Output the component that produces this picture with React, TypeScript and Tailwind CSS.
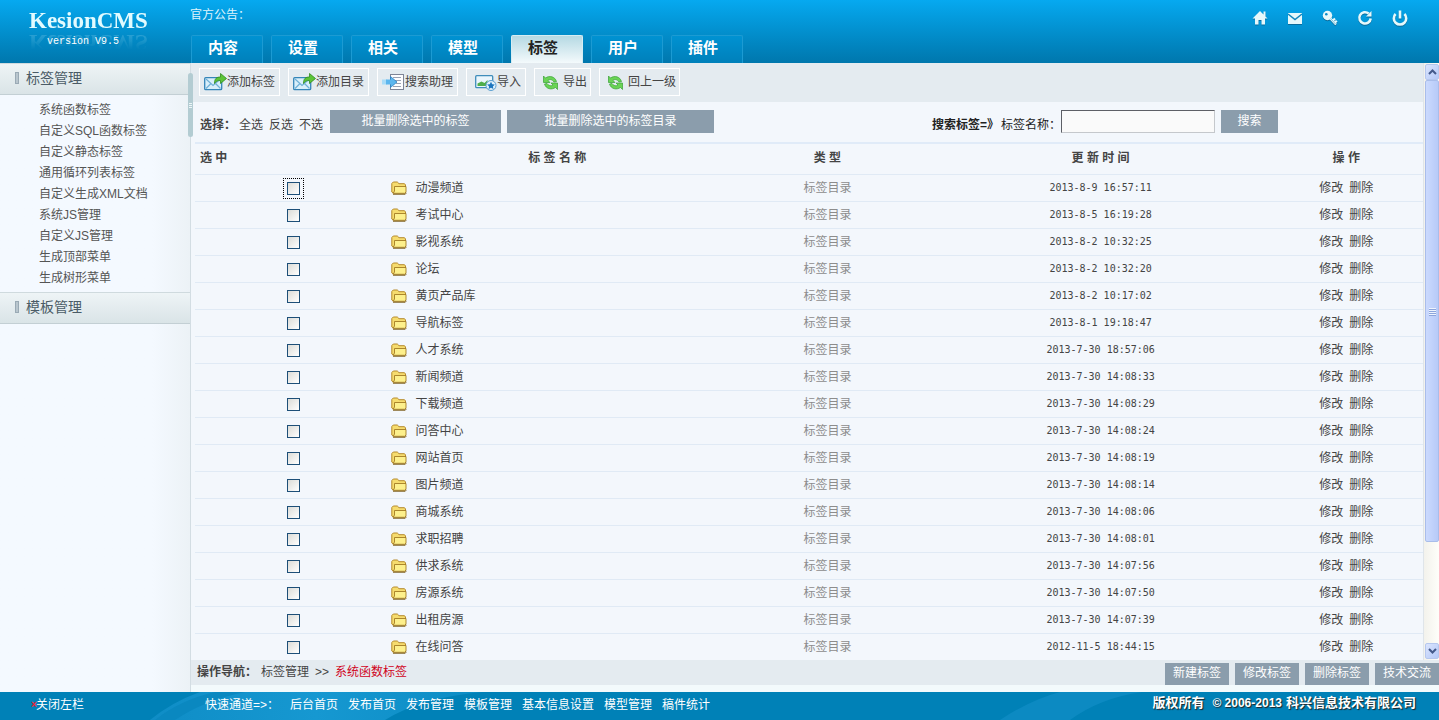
import clsx from 'clsx';

const tabs = ['内容', '设置', '相关', '模型', '标签', '用户', '插件'];

const sideLinks = [
    '系统函数标签',
    '自定义SQL函数标签',
    '自定义静态标签',
    '通用循环列表标签',
    '自定义生成XML文档',
    '系统JS管理',
    '自定义JS管理',
    '生成顶部菜单',
    '生成树形菜单',
];

const rows = [
    { name: '动漫频道', time: '2013-8-9 16:57:11' },
    { name: '考试中心', time: '2013-8-5 16:19:28' },
    { name: '影视系统', time: '2013-8-2 10:32:25' },
    { name: '论坛', time: '2013-8-2 10:32:20' },
    { name: '黄页产品库', time: '2013-8-2 10:17:02' },
    { name: '导航标签', time: '2013-8-1 19:18:47' },
    { name: '人才系统', time: '2013-7-30 18:57:06' },
    { name: '新闻频道', time: '2013-7-30 14:08:33' },
    { name: '下载频道', time: '2013-7-30 14:08:29' },
    { name: '问答中心', time: '2013-7-30 14:08:24' },
    { name: '网站首页', time: '2013-7-30 14:08:19' },
    { name: '图片频道', time: '2013-7-30 14:08:14' },
    { name: '商城系统', time: '2013-7-30 14:08:06' },
    { name: '求职招聘', time: '2013-7-30 14:08:01' },
    { name: '供求系统', time: '2013-7-30 14:07:56' },
    { name: '房源系统', time: '2013-7-30 14:07:50' },
    { name: '出租房源', time: '2013-7-30 14:07:39' },
    { name: '在线问答', time: '2012-11-5 18:44:15' },
];

const quickLinks = ['后台首页', '发布首页', '发布管理', '模板管理', '基本信息设置', '模型管理', '稿件统计'];
const bottomButtons = ['新建标签', '修改标签', '删除标签', '技术交流'];

function MailAddIcon() {
    return (
        <svg width="23" height="20" viewBox="0 0 23 20">
            <rect x="0.7" y="5.7" width="17" height="12" rx="1" fill="#d9effa" stroke="#3585b8" strokeWidth="1.3" />
            <path d="M2 7l7 6.5L16.5 7M2 16.5l5-5M16.5 16.5l-5-5" fill="none" stroke="#6fb0d6" strokeWidth="1.2" />
            <path d="M10.5 11.500c0-5 2-6.500 6-6.500V1.500L22.500 6.500l-6 5V8.500c-3 0-4.500.500-6 3z" fill="#5cc437" stroke="#2e8b1e" strokeWidth="0.8" />
        </svg>
    );
}

function SearchDocIcon() {
    return (
        <svg width="23" height="20" viewBox="0 0 23 20">
            <rect x="8.5" y="2.5" width="13" height="15" fill="#fdfdff" stroke="#7d8496" />
            <path d="M11 5.5h8M12 8.5h7M14 11.500h5M11 14.500h8" stroke="#9aa2b3" />
            <path d="M0 7.500h5v5H0z" fill="#a9dcf8" />
            <path d="M4 7.500h4.500V4.500L15 10l-6.500 5.500v-3H4z" fill="#5cb6ee" />
            <path d="M8.500 7.500v-3L15 10l-6.500 5.500v-3" fill="none" stroke="#2a7fc2" strokeWidth="0.8" />
        </svg>
    );
}

function ImportIcon() {
    return (
        <svg width="23" height="20" viewBox="0 0 23 20">
            <rect x="1.7" y="3.7" width="17" height="12" rx="1" fill="#eaf6fd" stroke="#3f8dbb" strokeWidth="1.3" />
            <path d="M3.500 14v-2.500l4-2 3 1.500 3-3v6z" fill="#4fae4b" />
            <circle cx="17" cy="13.500" r="5" fill="#dff0fb" stroke="#5b9fd0" />
            <path d="M17 9.800l1.200 2.400 2.600.400-1.900 1.800.500 2.600-2.400-1.200-2.400 1.200.500-2.600-1.900-1.800 2.600-.400z" fill="#1d76bf" />
        </svg>
    );
}

function CycleIcon() {
    return (
        <svg width="15" height="15" viewBox="0 0 15 15">
            <g fill="#6ad455" stroke="#38a035" strokeWidth="0.7" strokeLinejoin="round">
                <path d="M.500 1v6.500H7L5 5.500c1.500-1.500 4-1.300 6 1.500l2.500-.500C12 1.500 6.500.200 2.500 3z" />
                <path d="M14.500 14.500V8H8l2 2c-1.500 1.300-4 1-6-1.500L1.500 9c1.500 5 7 6.200 11 3.500z" />
            </g>
        </svg>
    );
}

function FolderIcon() {
    return (
        <svg width="16" height="14" viewBox="0 0 16 14">
            <path d="M.8 11V2.500L2.300 1h4L8 2.700h5.500l1 1.300v8H2z" fill="#f6dc6e" stroke="#b68a2c" />
            <path d="M3.500 5.500h11.500v5.500L13.800 12.300H2.200L3.500 10z" fill="#fdf08c" stroke="#a37b22" strokeWidth="0.9" />
            <path d="M2 13.300h12.200l1.300-1.500" fill="none" stroke="#7d5d1c" strokeWidth="0.9" />
        </svg>
    );
}

function HomeIcon() {
    return (
        <svg width="16" height="16" viewBox="0 0 16 16" fill="#e6f8fb">
            <path d="M8 1L.5 8.500H3V14.500h3.500V10h3v4.500H13V8.500h2.500L13.500 6.500V1.500h-2v3z" />
        </svg>
    );
}

function MailIcon() {
    return (
        <svg width="16" height="16" viewBox="0 0 16 16">
            <rect x="1" y="3" width="14" height="11" fill="#e6f8fb" />
            <path d="M1 4l7 5.500L15 4" fill="none" stroke="#1286bd" strokeWidth="1.5" />
        </svg>
    );
}

function KeyIcon() {
    return (
        <svg width="16" height="16" viewBox="0 0 16 16">
            <circle cx="5.5" cy="5.5" r="4.700" fill="#e6f8fb" />
            <circle cx="4.300" cy="4.200" r="1.300" fill="#0c8cc8" />
            <path d="M8 8l6 6.500M10.500 11l2.500-2.500M12.500 13l2.300-2.300" stroke="#e6f8fb" strokeWidth="2.200" />
            <path d="M8.500 8.500l5 5.500" stroke="#5cb3d8" strokeWidth="0.8" />
        </svg>
    );
}

function ReloadIcon() {
    return (
        <svg width="16" height="16" viewBox="0 0 16 16">
            <path d="M11.700 3.500A5.700 5.700 0 1 0 13.700 8.500" fill="none" stroke="#e6f8fb" strokeWidth="2.500" />
            <path d="M14.500 1v5.500H9z" fill="#e6f8fb" />
        </svg>
    );
}

function PowerIcon() {
    return (
        <svg width="16" height="16" viewBox="0 0 16 16" fill="none" stroke="#e6f8fb" strokeWidth="2.6">
            <path d="M3.600 4a6.200 6.200 0 1 0 8.800 0M8 .5v8" />
        </svg>
    );
}

const headerIcons = [
    { label: '首页', icon: <HomeIcon /> },
    { label: '邮件', icon: <MailIcon /> },
    { label: '密码', icon: <KeyIcon /> },
    { label: '刷新', icon: <ReloadIcon /> },
    { label: '退出', icon: <PowerIcon /> },
];

const tools = [
    { label: '添加标签', icon: <MailAddIcon />, pad: 'px-1' },
    { label: '添加目录', icon: <MailAddIcon />, pad: 'px-1' },
    { label: '搜索助理', icon: <SearchDocIcon />, pad: 'px-1' },
    { label: '导入', icon: <ImportIcon />, pad: 'pl-[7px] pr-1' },
    { label: '导出', icon: <CycleIcon />, pad: 'pl-2 pr-[3px] gap-[5px]' },
    { label: '回上一级', icon: <CycleIcon />, pad: 'pl-2 pr-[3px] gap-[5px]' },
];

function Header() {
    return (
        <header className="flex h-[63px] shrink-0 bg-linear-to-b from-[#06a9f0] to-[#0077ad] text-white">
            <div className="flex w-[190px] shrink-0 flex-col pl-[29px] pt-2">
                <div className="h-[26px] font-['Liberation_Serif',serif] text-[23px] leading-[26px] font-bold text-[#e2fbff] [-webkit-box-reflect:below_-5px_linear-gradient(transparent_20%,rgba(255,255,255,0.25))]">
                    KesionCMS
                </div>
                <div className="pl-[18px] font-['Liberation_Mono',monospace] text-[10px] leading-4">version V9.5</div>
            </div>
            <div className="flex flex-1 flex-col justify-between">
                <p className="pt-[5px] leading-5 text-[#dff4fd]">官方公告：</p>
                <nav className="flex gap-2 pl-px">
                    {tabs.map((tab) => (
                        <a
                            key={tab}
                            href="#"
                            className={clsx(
                                'h-7 w-[72px] rounded-t-xs border border-b-0 pr-2 text-center text-[15px] leading-6 font-bold',
                                tab === '标签'
                                    ? 'border-[#d6edf3] bg-linear-to-b from-[#b5d9e3] to-[#f4fafc] text-[#222]'
                                    : 'border-[#1c9bd3] bg-linear-to-b from-[#0092d2] to-[#0080ba] text-white',
                            )}
                        >
                            {tab}
                        </a>
                    ))}
                </nav>
            </div>
            <div className="flex h-9 items-center gap-[19px] pr-[31px]">
                {headerIcons.map((item) => (
                    <button key={item.label} type="button" aria-label={item.label} className="drop-shadow-[0_1px_0_#0a6c9c]">
                        {item.icon}
                    </button>
                ))}
            </div>
        </header>
    );
}

function SideHeading({ title }: { title: string }) {
    return (
        <h2 className="flex h-8 items-center gap-[7px] border-y border-t-[#cfdade] border-b-[#c3cfd4] bg-linear-to-b from-[#eef4f6] to-[#dae4e7] pb-[2px] pl-[15px] text-sm text-[#4a5b66]">
            <span className="h-3 w-1 border border-[#9aaab5] bg-[#b9c6ce]"></span>
            {title}
        </h2>
    );
}

function Sidebar() {
    return (
        <aside className="relative w-[191px] shrink-0 border-r border-[#d3dde3] bg-linear-to-r from-[#f4f9ff] from-80% to-[#ecf2f6]">
            <SideHeading title="标签管理" />
            <ul className="pt-1 pb-1 pl-[39px] text-[#555]">
                {sideLinks.map((link) => (
                    <li key={link} className="h-[21px] leading-[23px]">
                        <a href="#">{link}</a>
                    </li>
                ))}
            </ul>
            <SideHeading title="模板管理" />
            {/* drag handle between the sidebar and the content */}
            <div className="absolute top-[10px] -right-[3px] flex h-16 w-[5px] flex-col items-center justify-center gap-px rounded-sm bg-[#b3ccd2]">
                <span className="h-px w-[3px] bg-[#edf6f8]"></span>
                <span className="h-px w-[3px] bg-[#edf6f8]"></span>
                <span className="h-px w-[3px] bg-[#edf6f8]"></span>
            </div>
        </aside>
    );
}

function Toolbar() {
    return (
        <div className="flex h-[39px] shrink-0 gap-2 bg-[#e4ebf0] pt-[5px] pl-2">
            {tools.map((tool) => (
                <button
                    key={tool.label}
                    type="button"
                    className={clsx('flex h-7 items-center border border-white leading-6 whitespace-nowrap', tool.pad)}
                >
                    {tool.icon}
                    <span className="pb-px">{tool.label}</span>
                </button>
            ))}
        </div>
    );
}

function FilterBar() {
    return (
        <div className="flex h-[42px] shrink-0 items-start justify-between border-b-2 border-[#e0ebf8] pt-2 pr-[145px] pl-[5px]">
            <div className="flex gap-[7px]">
                <div className="flex gap-[6px] pt-1 leading-[22px]">
                    <span>
                        <b>选择：</b>
                        <a href="#" className="pl-[3px]">全选</a>
                    </span>
                    <a href="#">反选</a>
                    <a href="#">不选</a>
                </div>
                <div className="flex gap-[6px]">
                    <button type="button" className="h-[23px] w-[171px] bg-[#8b9dac] pb-px text-white">批量删除选中的标签</button>
                    <button type="button" className="h-[23px] w-[207px] bg-[#8b9dac] pb-px text-white">批量删除选中的标签目录</button>
                </div>
            </div>
            <form className="flex text-[#222]">
                <label htmlFor="keyword" className="pt-1 leading-[22px]">
                    <b className="pr-[2px]">搜索标签=》</b>标签名称：
                </label>
                <input
                    id="keyword"
                    type="text"
                    className="h-[23px] w-[154px] border border-t-[#5d5f66] border-r-[#c5c8cc] border-b-[#c5c8cc] border-l-[#5d5f66] bg-[#fafafa] px-1"
                />
                <button type="button" className="ml-[6px] h-[23px] w-[57px] bg-[#8b9dac] pb-px text-white">搜索</button>
            </form>
        </div>
    );
}

function TagTable() {
    return (
        <table className="w-full table-fixed border-separate border-spacing-0">
            <thead>
                <tr className="h-[31px] text-center font-bold [&>th]:border-b [&>th]:border-[#e0eaf5] [&>th]:p-0 [&>th]:pb-[2px]">
                    <th className="w-[16%] text-left"><span className="pl-[5px]">选 中</span></th>
                    <th className="w-[27%]">标 签 名 称</th>
                    <th className="w-[17%]">类 型</th>
                    <th className="w-[27.5%]">更 新 时 间</th>
                    <th className="w-[12.5%]">操 作</th>
                </tr>
            </thead>
            <tbody>
                {rows.map((row, idx) => (
                    <tr key={row.name} className="h-[27px] text-center [&>td]:border-b [&>td]:border-[#e0eaf5] [&>td]:p-0 [&>td]:leading-5">
                        <td>
                            <input
                                type="checkbox"
                                aria-label={row.name}
                                className={clsx(
                                    'mx-auto block h-[13px] w-[13px] appearance-none border border-[#1d4f78] bg-linear-to-br from-[#dcdcd7] to-white',
                                    idx === 0 && 'outline-1 outline-offset-[3px] outline-black outline-dotted',
                                )}
                            />
                        </td>
                        <td>
                            <div className="flex items-center gap-2 leading-5">
                                <FolderIcon />
                                <a href="#" className="pb-px">{row.name}</a>
                            </div>
                        </td>
                        <td className="text-[#8c8c8c]"><div className="pb-px">标签目录</div></td>
                        <td className="font-['DejaVu_Sans_Mono',monospace] text-[10px]">{row.time}</td>
                        <td>
                            <div className="flex justify-center gap-[6px] pb-px">
                                <a href="#">修改</a>
                                <a href="#">删除</a>
                            </div>
                        </td>
                    </tr>
                ))}
            </tbody>
        </table>
    );
}

function ScrollButton({ label, d }: { label: string; d: string }) {
    return (
        <button type="button" aria-label={label} className="flex h-4 shrink-0 items-center justify-center rounded-xs border border-[#b5c7ee] bg-linear-to-br from-[#dbe5fe] to-[#b4c8f7]">
            <svg width="9" height="6" viewBox="0 0 9 6">
                <path d={d} fill="none" stroke="#44598a" strokeWidth="2" />
            </svg>
        </button>
    );
}

function Scrollbar() {
    return (
        <div className="flex w-4 shrink-0 flex-col border-l border-[#dfe5ea] bg-linear-to-r from-[#f3f2ec] to-[#fefefa] py-px pl-px">
            <ScrollButton label="向上滚动" d="M1 5l3.500-3.500L8 5" />
            <div className="flex flex-82 flex-col items-center justify-center gap-px rounded-xs border border-[#a9bdea] bg-linear-to-r from-[#cbdafe] to-[#b7caf8]">
                {[0, 1, 2, 3].map((n) => (
                    <span key={n} className="h-px w-[7px] bg-[#eef4fe] shadow-[0_1px_0_#8ca5dc]"></span>
                ))}
            </div>
            <div className="flex-18"></div>
            <ScrollButton label="向下滚动" d="M1 1l3.500 3.500L8 1" />
        </div>
    );
}

function StatusBar() {
    return (
        <div className="shrink-0 bg-[#f3fafc] pb-[7px]">
            <div className="flex h-[25px] justify-between bg-[#e4ebf0] pl-[6px]">
                <p className="leading-6">
                    <b>操作导航：</b>
                    <span className="pl-1">标签管理</span>
                    <span className="px-[6px]">&gt;&gt;</span>
                    <a href="#" className="text-[#d0021b]">系统函数标签</a>
                </p>
                <div className="flex items-end gap-[6px]">
                    {bottomButtons.map((label) => (
                        <button key={label} type="button" className="h-[22px] w-16 bg-[#8b9dac] pb-[2px] text-white">
                            {label}
                        </button>
                    ))}
                </div>
            </div>
        </div>
    );
}

function Footer() {
    return (
        <footer className="relative flex h-7 shrink-0 items-start bg-[#0081b7] leading-[26px] text-white">
            <svg className="absolute inset-0 h-full w-full" viewBox="0 0 1439 28" preserveAspectRatio="none">
                <defs>
                    <linearGradient id="wave" x1="0" x2="1" y1="0" y2="0">
                        <stop offset="0" stopColor="#0f8dc6" />
                        <stop offset="0.5" stopColor="#1698d1" />
                        <stop offset="1" stopColor="#0c8cc4" />
                    </linearGradient>
                </defs>
                <path d="M150 28Q172 10 200 0H482Q420 6 385 28z" fill="url(#wave)" />
                <path d="M175 28Q205 8 245 0H215Q180 8 155 28z" fill="#0a88c0" />
                <path d="M1000 28Q1030 8 1060 0H1142Q1100 6 1070 28z" fill="#0c8ac2" />
            </svg>
            <div className="relative w-[205px] shrink-0 pl-[31px]">
                <a href="#" className="flex"><span className="w-[5px] text-[10px] font-bold text-[#e8263a]">×</span>关闭左栏</a>
            </div>
            <nav className="relative flex gap-[10px]">
                <span className="w-[75px]">快速通道=&gt;：</span>
                {quickLinks.map((link) => (
                    <a key={link} href="#">{link}</a>
                ))}
            </nav>
            <p className="relative ml-auto flex gap-2 pr-[23px] text-[13px] leading-[22px] font-bold [text-shadow:1px_1px_1px_#222]">
                <span>版权所有</span>
                <span><span className="pr-1 text-xs">© 2006-2013</span>科兴信息技术有限公司</span>
            </p>
        </footer>
    );
}

export default function App() {
    return (
        <div className="flex h-screen flex-col overflow-hidden bg-[#f3f7fc] font-['Liberation_Sans','Noto_Sans_CJK_SC',sans-serif] text-xs text-[#444]">
            <Header />
            <div className="flex min-h-0 flex-1">
                <Sidebar />
                <main className="flex min-w-0 flex-1 flex-col">
                    <div className="flex min-h-0 flex-1">
                        <div className="flex min-w-0 flex-1 flex-col">
                            <Toolbar />
                            <div className="min-h-0 flex-1 overflow-hidden pl-1">
                                <FilterBar />
                                <TagTable />
                            </div>
                        </div>
                        <Scrollbar />
                    </div>
                    <StatusBar />
                </main>
            </div>
            <Footer />
        </div>
    );
}
